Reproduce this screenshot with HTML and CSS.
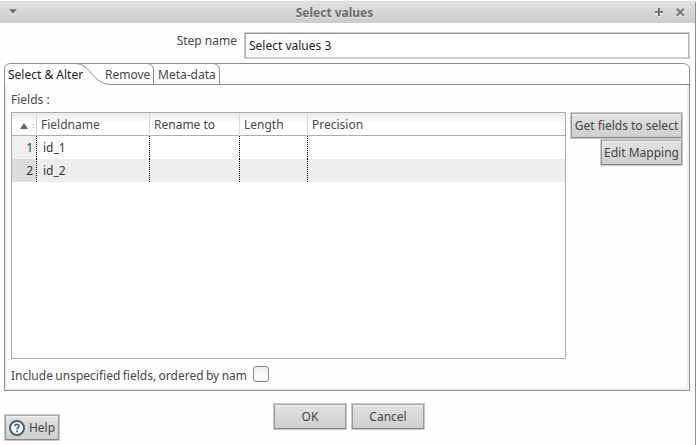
FILE: index.html
```html
<!DOCTYPE html>
<html lang="en">
<head>
<meta charset="utf-8">
<title>Select values</title>
<link rel="stylesheet" href="styles.css">
</head>
<body>
<div class="window">
  <header class="titlebar">
    <svg class="menu-icon" width="8" height="6" viewBox="0 0 8 6"><path d="M0 1.6h8L4 6z" fill="#fff" opacity=".7"/><path d="M0 .3h8L4 4.8z" fill="#686868"/></svg>
    <h1 class="title">Select values</h1>
    <svg class="max-icon" width="9" height="9" viewBox="0 0 9 9"><path d="M4 1.5v8M0 5.500h8" stroke="#f2f2f2" stroke-width="2" fill="none"/><path d="M4 0v8M0 4h8" stroke="#777" stroke-width="2" fill="none"/></svg>
    <svg class="close-icon" width="9" height="9" viewBox="0 0 9 9"><path d="M1 2l7 7M8 2L1 9" stroke="#f2f2f2" stroke-width="2" fill="none"/><path d="M.8.8l7 7M7.800.8l-7 7" stroke="#777" stroke-width="2.1" fill="none"/></svg>
  </header>
  <div class="step-row">
    <label class="step-label" for="step">Step name</label>
    <input class="step-input" id="step" type="text" value="Select values 3">
  </div>
  <section class="panel">
    <nav class="tabs">
      <svg class="tab-lines" width="686" height="22" viewBox="0 0 686 22" fill="none" stroke="#8c8c8c"><path d="M.5 22V6Q1 1 6 .5H679.500Q685 1 685.500 6V22"/><path d="M71 .5C88 .5 87 21.500 108 21.500H685"/><path d="M144 .5Q149.500 2 149.500 7V21M210 .5Q215.500 2 215.500 7V21"/></svg>
      <span class="tab tab-active">Select &amp; Alter</span>
      <span class="tab tab-remove">Remove</span>
      <span class="tab tab-meta">Meta-data</span>
    </nav>
    <div class="content">
      <div class="fields-label">Fields :</div>
      <div class="main-row">
        <div class="table">
          <div class="row head">
            <div class="cell sort"><svg width="8" height="6" viewBox="0 0 8 6"><path d="M4 0l4 6H0z" fill="#666"/></svg><i class="dots"></i></div>
            <div class="cell">Fieldname</div><div class="cell">Rename to</div><div class="cell">Length</div><div class="cell">Precision</div>
          </div>
          <div class="row"><div class="cell num">1</div><div class="cell value">id_1</div><div class="cell"></div><div class="cell"></div><div class="cell"></div></div>
          <div class="row alt"><div class="cell num">2</div><div class="cell value">id_2</div><div class="cell"></div><div class="cell"></div><div class="cell"></div></div>
        </div>
        <div class="actions">
          <button class="btn btn-get">Get fields to select</button>
          <button class="btn btn-edit">Edit Mapping</button>
        </div>
      </div>
      <div class="include-row">
        <span class="include-label">Include unspecified fields, ordered by nam</span>
        <span class="checkbox"></span>
      </div>
    </div>
  </section>
  <footer class="footer">
    <button class="btn btn-help"><svg width="16" height="16" viewBox="0 0 16 16"><circle cx="8" cy="8" r="7" fill="#fff" stroke="#3c5f82" stroke-width="2"/><path d="M5.800 6.300C6 3.700 10.300 3.900 10 6.300C9.800 7.700 8 7.600 8 9.500M8 10.600v1.700" fill="none" stroke="#3c5f82" stroke-width="1.600"/></svg><span>Help</span></button>
    <button class="btn btn-ok">OK</button>
    <button class="btn btn-cancel">Cancel</button>
  </footer>
</div>
</body>
</html>
```
FILE: styles.css
```css
* { box-sizing: border-box; }
body {
  margin: 0;
  background: #fefefe;
  font-family: "Noto Sans", sans-serif;
  font-size: 12px;
  line-height: 16px;
  color: #484848;
  overflow: hidden;
}
.window {
  width: 696px;
  height: 445px;
  border-right: 1px solid #8c8c8c;
  border-top: 1px solid #f5f5f5;
  border-top-right-radius: 4px;
}
.titlebar {
  height: 22px;
  display: flex;
  align-items: center;
  padding: 0 10px 0 9px;
  background: linear-gradient(#e1e1e1, #cbcbcb);
}
.title {
  flex: 1;
  margin: 2px 3px 0 0;
  font-size: 12px;
  line-height: 16px;
  font-weight: bold;
  text-align: center;
  color: #6c6c6c;
  text-shadow: 0 1px 0 #e8e8e8;
}
.max-icon { margin-right: 12px; }
.step-row { height: 40px; display: flex; padding: 9px 5px 0 0; }
.step-label { width: 244px; padding: 1px 7px 0 0; text-align: right; }
.step-input {
  flex: 1;
  height: 27px;
  padding: 0 4px;
  border: 1px solid #ccc;
  outline: 0;
  box-shadow: inset 0 1px #999, inset 1px 0 #aaa, inset -1px 0 #b5b5b5, inset 0 -1px #ccc;
  font: inherit;
  color: #222;
  background: #fff;
}
.panel { width: 686px; margin-left: 4px; }
.tabs { position: relative; height: 22px; display: flex; padding: 4px 0 0 4px; }
.tab-lines { position: absolute; left: 0; top: 0; }
.tab { position: relative; white-space: nowrap; }
.tab-active { width: 97px; color: #222; }
.tab-remove { width: 53px; }
.content {
  height: 306px;
  padding: 7px 6px 0 6px;
  border: 1px solid #8c8c8c;
  border-top: 0;
  box-shadow: inset 2px 0 #f0f0f0, inset -2px 0 #f0f0f0, inset 0 -2px #f0f0f0;
}
.fields-label { height: 20px; }
.main-row { display: flex; justify-content: space-between; height: 247px; }
.table { width: 555px; border: 1px solid #acacac; background: #fff; }
.row { display: grid; grid-template-columns: 24px 113px 90px 68px 1fr; height: 23px; }
.cell { padding: 4px 4px 3px; white-space: nowrap; border-left: 1px dotted #000; }
.cell:first-child { border-left: 0; }
.head { background: linear-gradient(#eaeaea, #fff 10px); border-bottom: 1px solid #acacac; }
.head .cell { border-left: 1px solid #d8d8d8; }
.head .sort { border-left: 0; padding: 2px 0 0 8px; display: flex; align-items: center; justify-content: space-between; }
.dots { width: 1px; height: 4px; margin-right: 2px; border-top: 1px solid #aaa; border-bottom: 1px solid #aaa; }
.num { text-align: right; color: #333; background: #efefef; padding-right: 3px; }
.value { color: #333; padding-left: 6px; }
.alt { background: #ededed; }
.alt .num { background: #dcdcdc; }
.actions { display: flex; flex-direction: column; align-items: flex-end; }
.btn {
  height: 27px;
  padding: 0;
  display: flex;
  align-items: center;
  justify-content: center;
  font: inherit;
  color: #444;
  white-space: nowrap;
  border: 1px solid #c8c8c8;
  background: linear-gradient(#e3e3e3, #cecece);
  box-shadow: inset 0 1px #aaa, inset 1px 0 #999, inset -1px 0 #999, inset 0 -1px #858585, inset 0 2px #f1f1f1;
}
.btn-get { width: 113px; }
.btn-edit { width: 83px; }
.include-row { display: flex; padding-top: 7px; }
.include-label { width: 242px; padding-top: 2px; white-space: nowrap; word-spacing: -.7px; }
.checkbox {
  width: 16px;
  height: 16px;
  border: 1px solid #888;
  border-radius: 3px;
  background: linear-gradient(#f0f0f0, #fff);
}
.footer { display: grid; grid-template-columns: 269px 78px 74px; padding: 12px 0 0 4px; }
.btn-help { width: 56px; margin-top: 11px; gap: 4px; }
.btn-ok, .btn-cancel { width: 74px; }
```
